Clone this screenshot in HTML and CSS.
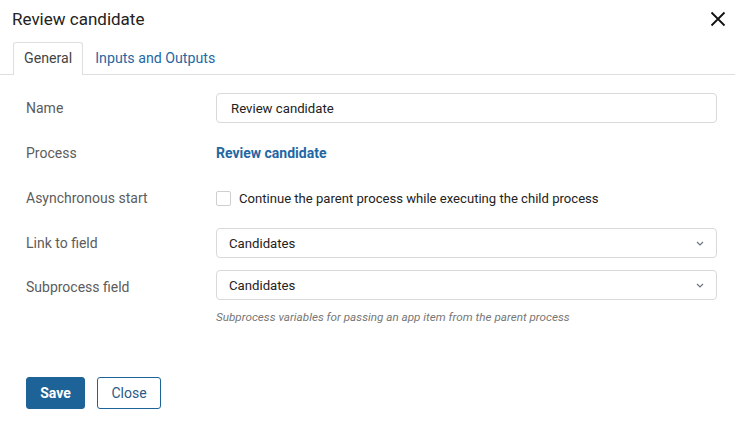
FILE: index.html
```html
<!DOCTYPE html>
<html>
<head>
<meta charset="utf-8">
<link rel="stylesheet" href="styles.css">
</head>
<body>
<div class="dialog">
  <div class="header">
    <div class="title">Review candidate</div>
    <button class="close-x" aria-label="Close">
      <svg width="16" height="16" viewBox="0 0 16 16"><path d="M1.5 1.5 L14.5 14.5 M14.5 1.5 L1.5 14.5" stroke="#111" stroke-width="1.8" fill="none"/></svg>
    </button>
  </div>
  <div class="tabs">
    <div class="tab active">General</div>
    <div class="tab">Inputs and Outputs</div>
  </div>
  <div class="form">
    <div class="row r-name">
      <div class="label">Name</div>
      <div class="field"><div class="input">Review candidate</div></div>
    </div>
    <div class="row r-process">
      <div class="label">Process</div>
      <div class="field"><span class="link">Review candidate</span></div>
    </div>
    <div class="row r-async">
      <div class="label">Asynchronous start</div>
      <div class="field check"><span class="box"></span><span>Continue the parent process while executing the child process</span></div>
    </div>
    <div class="row r-link">
      <div class="label">Link to field</div>
      <div class="field"><div class="input select"><span>Candidates</span><svg class="chev" width="8" height="5" viewBox="0 0 8 5"><path d="M1 1 L4 4 L7 1" stroke="#6b7280" stroke-width="1.2" fill="none"/></svg></div></div>
    </div>
    <div class="row r-sub">
      <div class="label">Subprocess field</div>
      <div class="field">
        <div class="input select"><span>Candidates</span><svg class="chev" width="8" height="5" viewBox="0 0 8 5"><path d="M1 1 L4 4 L7 1" stroke="#6b7280" stroke-width="1.2" fill="none"/></svg></div>
        <div class="hint">Subprocess variables for passing an app item from the parent process</div>
      </div>
    </div>
  </div>
  <div class="footer">
    <button class="btn primary">Save</button>
    <button class="btn secondary">Close</button>
  </div>
</div>
</body>
</html>
```
FILE: styles.css
```css
* { box-sizing: border-box; }
html, body { margin: 0; padding: 0; background: #fff; }
body {
  font-family: Roboto, "Liberation Sans", sans-serif;
  color: #333;
  width: 735px;
  height: 430px;
  overflow: hidden;
}
.header {
  display: flex;
  justify-content: space-between;
  align-items: center;
  height: 40px;
  padding: 0 6px 0 12px;
}
.title {
  font-size: 17px;
  color: #222;
  line-height: 20px;
  margin-top: -2px;
}
.close-x {
  border: 0;
  background: none;
  padding: 0;
  width: 22px;
  height: 22px;
  display: flex;
  align-items: center;
  justify-content: center;
  margin-top: -3px;
}
.tabs {
  display: flex;
  margin-top: 2px;
  padding-left: 13px;
  border-bottom: 1px solid #dedede;
  height: 33px;
}
.tab {
  font-size: 14.2px;
  line-height: 31px;
  padding: 0 11px;
  color: #1f68a3;
  border: 1px solid transparent;
  border-bottom: 0;
}
.tab.active {
  color: #444;
  background: #fff;
  border-color: #dedede;
  border-radius: 3px 3px 0 0;
  height: 33px;
  padding: 0 10px;
}
.form {
  padding: 18px 18px 0 26px;
}
.row {
  display: grid;
  grid-template-columns: 190px 1fr;
  align-items: start;
  font-size: 14px;
}
.label {
  color: #5c5c5c;
  line-height: 30px;
}
.r-name { margin-bottom: 14px; }
.r-process { margin-bottom: 14px; }
.r-process .label, .r-process .field { line-height: 32px; }
.r-async { margin-bottom: 15px; }
.r-async .label { line-height: 30px; }
.r-link { margin-bottom: 12px; }
.r-sub .label { padding-top: 2px; }
.input {
  height: 30px;
  border: 1px solid #d9d9d9;
  border-radius: 4px;
  padding: 0 12px 0 14px;
  display: flex;
  align-items: center;
  color: #222;
  font-size: 13.2px;
}
.select {
  justify-content: space-between;
  padding-left: 12px;
  padding-right: 12px;
}
.chev { display: block; margin-top: 1px; }
.link {
  color: #1f68a3;
  font-weight: 700;
}
.check {
  display: flex;
  align-items: center;
  height: 30px;
  gap: 8px;
  font-size: 13.1px;
  color: #222;
}
.box {
  width: 15px;
  height: 15px;
  border: 1px solid #cfcfcf;
  border-radius: 2px;
  background: #fff;
  flex: none;
}
.hint {
  font-size: 11.7px;
  font-style: italic;
  color: #777;
  margin-top: 10px;
  line-height: 14px;
}
.footer {
  display: flex;
  gap: 12px;
  padding: 0 0 0 26px;
  margin-top: 53px;
}
.btn {
  height: 32px;
  font-family: inherit;
  font-size: 14px;
  border-radius: 3px;
  padding: 0;
}
.primary {
  width: 59px;
  background: #1e6398;
  border: 1px solid #1e6398;
  color: #fff;
  font-weight: 700;
}
.secondary {
  width: 64px;
  background: #fff;
  border: 1px solid #1e6398;
  color: #2a5a85;
}
```
